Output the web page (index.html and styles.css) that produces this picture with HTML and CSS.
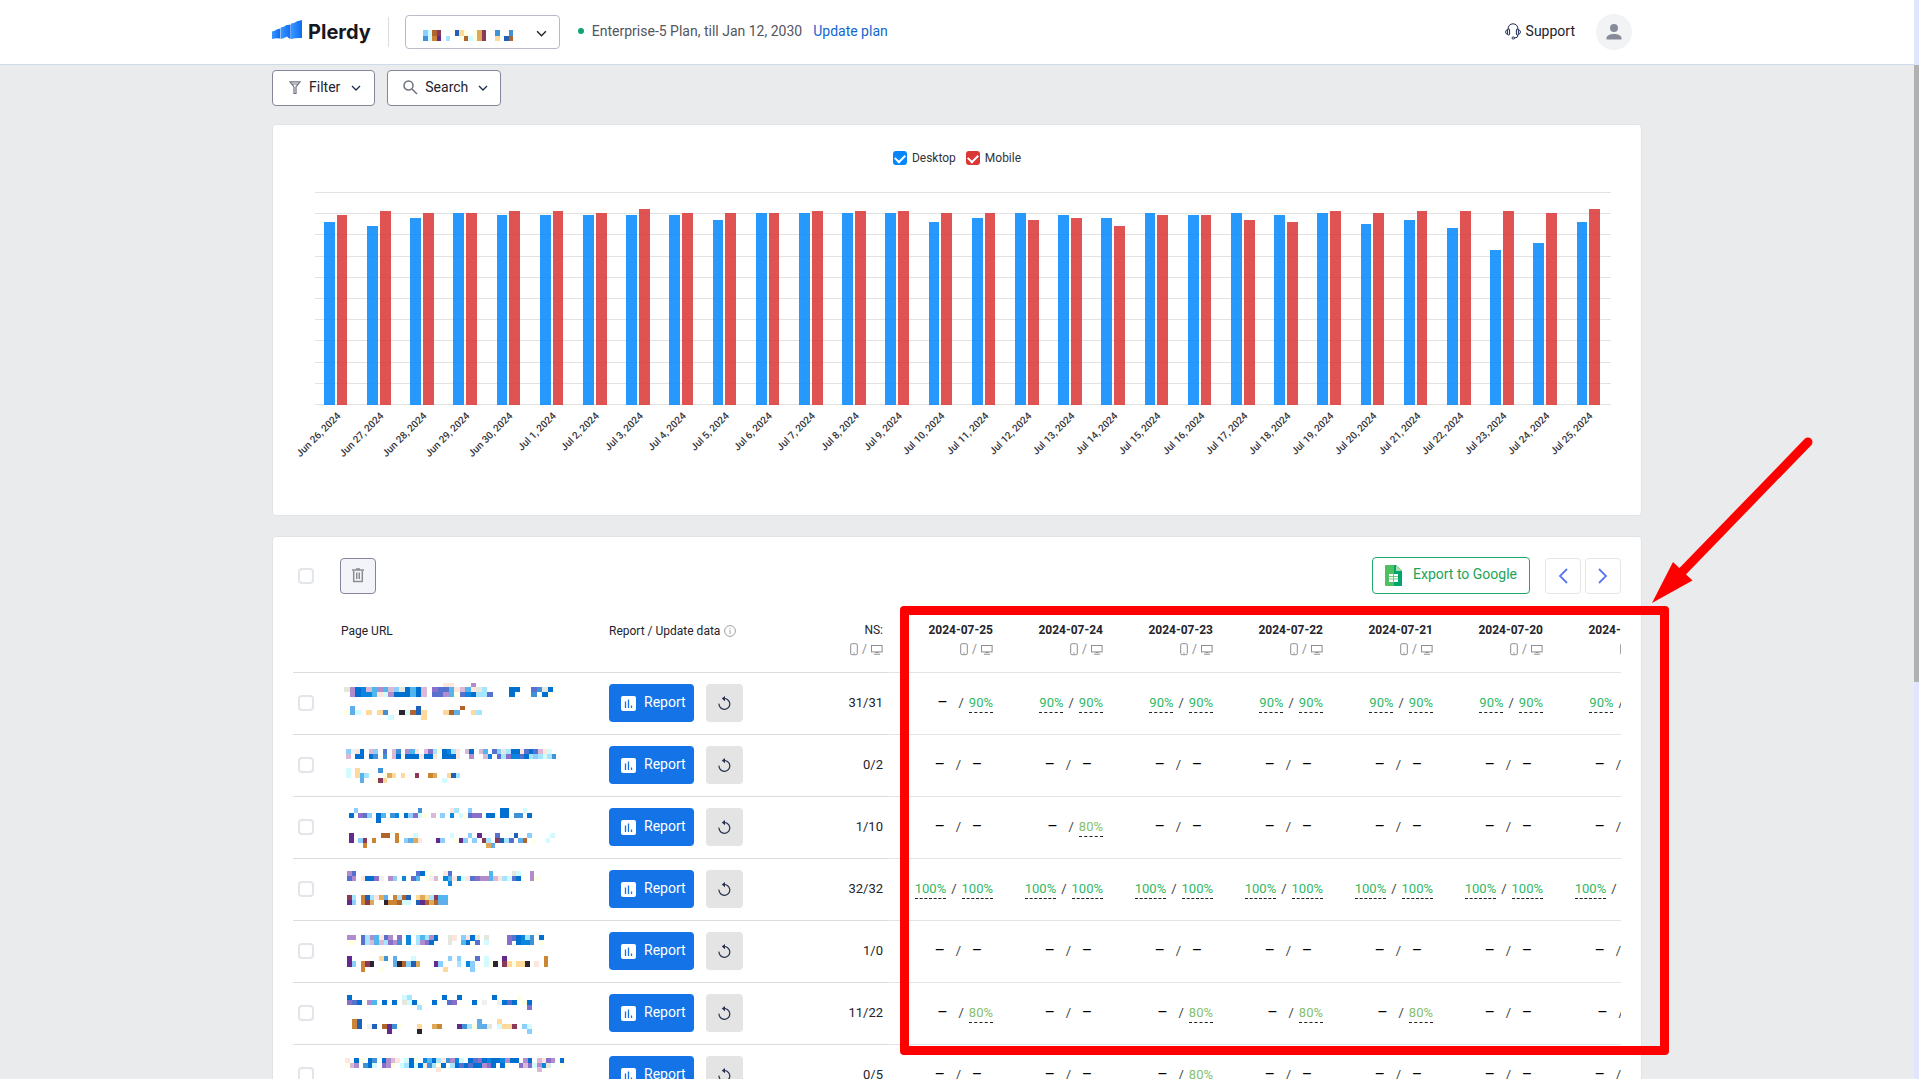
FILE: index.html
```html
<!DOCTYPE html>
<html lang="en">
<head>
<meta charset="utf-8">
<meta name="viewport" content="width=device-width, initial-scale=1">
<title>Plerdy</title>
<link rel="stylesheet" href="styles.css">
</head>
<body>
<svg class="sprite" aria-hidden="true">
  <symbol id="i-chevron" viewBox="0 0 10 6"><path d="M1 1l4 4 4-4" fill="none" stroke="currentColor" stroke-width="1.3"/></symbol>
  <symbol id="i-phone" viewBox="0 0 8 13"><rect x=".7" y=".7" width="6.6" height="11" rx="1.4" fill="none" stroke="currentColor"/><path d="M3.4 10h1.2" stroke="currentColor"/></symbol>
  <symbol id="i-desktop" viewBox="0 0 12 11"><rect x=".5" y="1.5" width="10.6" height="6.4" fill="none" stroke="currentColor"/><path d="M4.5 8.5h3M3 10.2h6" stroke="currentColor"/></symbol>
  <symbol id="i-chart" viewBox="0 0 15 15"><rect width="15" height="15" rx="2" fill="#fff"/><path d="M4.5 5.5V12M7.5 3.5V12M10.5 9.5V12" stroke="#1473e6" stroke-width="1.3"/></symbol>
  <symbol id="i-refresh" viewBox="0 0 13 14"><path d="M1 7.6A5.4 5.4 0 1 0 5 2.7" fill="none" stroke="currentColor" stroke-width="1.2"/><path d="M7 0L3.8 2.6 7 5.2z" fill="currentColor"/></symbol>
</svg>

<div class="app">
  <div class="page">
    <header class="header">
      <div class="container header-inner">
        <a class="logo" href="#">
          <svg width="30" height="20" viewBox="0 0 30 20" aria-hidden="true">
            <defs><linearGradient id="lg" x1="0" x2="1"><stop offset="0" stop-color="#3a97ff"/><stop offset="1" stop-color="#0f6cf2"/></linearGradient></defs>
            <path d="M0 11.500Q3 11 4.500 9.600L8.300 8.600V18.500Q4 17.600 0 19z" fill="url(#lg)"/>
            <path d="M8.700 19V7.500Q12 7 14 5.200L18.600 4.400V19Q16 18.400 15 16.500L11.500 18.200z" fill="url(#lg)"/>
            <path d="M19 19V3.600Q22 3.400 25 1.200L30 0V18Q24 17.600 19 19z" fill="url(#lg)"/>
          </svg>
          <span>Plerdy</span>
        </a>
        <div class="site-picker">
          <select class="site-select" aria-label="Website"><option></option></select>
          <svg class="site-mosaic" id="site-mosaic" width="100" height="14" aria-hidden="true"></svg>
          <svg class="site-chevron" width="11" height="7" aria-hidden="true"><use href="#i-chevron"/></svg>
        </div>
        <p class="plan"><i class="plan-dot"></i>Enterprise-5 Plan, till Jan 12, 2030 <a href="#">Update plan</a></p>
        <a class="support" href="#">
          <svg width="16" height="17" viewBox="0 0 16 17" fill="none" stroke="currentColor" aria-hidden="true"><path d="M3 6.500C3 3 5 .8 8 .8S13 3 13 6.500"/><rect x="2.600" y="6" width="2" height="6" rx="1"/><rect x="11.400" y="6" width="2" height="6" rx="1"/><path d="M2.600 6.600Q.6 7 .6 9t2 2.400M13.400 6.600q2 .4 2 2.400t-2 2.400M13 12q0 3-3.500 3"/><rect x="7" y="14" width="2.600" height="2" rx="1"/></svg>
          Support
        </a>
        <button class="avatar" type="button" aria-label="Account">
          <svg width="16" height="16" viewBox="0 0 16 16" fill="currentColor" aria-hidden="true"><circle cx="8" cy="4" r="4"/><path d="M.5 15.500v-1.500C.5 11.500 4.500 10 8 10s7.500 1.500 7.500 4v1.500z"/></svg>
        </button>
      </div>
    </header>

    <main class="container main">
      <div class="filters">
        <button class="tool-button" type="button">
          <svg width="12" height="13" viewBox="0 0 12 13" fill="none" stroke="#6f7280" stroke-width="1.200" aria-hidden="true"><path d="M1 .8h10L7 6v6.500H5V6zM2.500 3h7"/></svg>
          Filter
          <svg class="caret" width="10" height="6" aria-hidden="true"><use href="#i-chevron"/></svg>
        </button>
        <button class="tool-button tool-search" type="button">
          <svg width="15" height="15" viewBox="0 0 15 15" fill="none" stroke="#6f7280" stroke-width="1.500" aria-hidden="true"><circle cx="5.500" cy="5.500" r="4.500"/><path d="M9 9l5 5"/></svg>
          Search
          <svg class="caret" width="10" height="6" aria-hidden="true"><use href="#i-chevron"/></svg>
        </button>
      </div>

      <section class="card chart-card" aria-label="Daily score">
        <div class="legend">
          <label><input class="swatch swatch-desktop" type="checkbox" checked>Desktop</label>
          <label><input class="swatch swatch-mobile" type="checkbox" checked>Mobile</label>
        </div>
        <div class="plot">
          <div class="grid-lines"><i></i><i></i><i></i><i></i><i></i><i></i><i></i><i></i><i></i><i></i><i></i></div>
          <div class="bars" id="bars"></div>
        </div>
        <div class="ticks" id="ticks"></div>
      </section>

      <section class="card table-card">
        <div class="table-toolbar">
          <input class="check check-all" type="checkbox" aria-label="Select all">
          <button class="delete" type="button" aria-label="Delete">
            <svg width="12" height="15" viewBox="0 0 12 15" fill="none" stroke="#8c8c92" aria-hidden="true"><path d="M0 2h12M4 1h4" stroke-width="1.400"/><path d="M1.700 3v10.500h8.600V3" stroke-width="1.500"/><path d="M4.500 4.500V11M6 4.500V11M7.500 4.500V11"/></svg>
          </button>
          <button class="export" type="button">
            <svg width="17" height="21" viewBox="0 0 17 21" aria-hidden="true"><path d="M1 0h10l6 6v14a1 1 0 0 1-1 1H1a1 1 0 0 1-1-1V1a1 1 0 0 1 1-1z" fill="#4fc060"/><path d="M9 0h2l6 6v14a1 1 0 0 1-1 1H9z" fill="#00a56e"/><path d="M11 0l6 6h-6z" fill="#a8dfa9"/><path d="M4 9h9v8H4z" fill="#fff"/><path d="M4 11.500h9M4 14h9M8.500 9v8" stroke="#4fc060" stroke-width=".8"/></svg>
            <span class="button-text">Export to Google</span>
          </button>
          <div class="pager">
            <button type="button" aria-label="Previous"><svg width="10" height="16" viewBox="0 0 10 16" fill="none" stroke="currentColor" stroke-width="1.800"><path d="M9 1L2 8l7 7"/></svg></button>
            <button type="button" aria-label="Next"><svg width="10" height="16" viewBox="0 0 10 16" fill="none" stroke="currentColor" stroke-width="1.800"><path d="M1 1l7 7-7 7"/></svg></button>
          </div>
        </div>

        <div class="table-scroll">
          <table class="report-table">
            <colgroup><col class="c-check"><col class="c-url"><col class="c-report"><col span="8" class="c-value"></colgroup>
            <thead>
              <tr>
                <th></th>
                <th class="label">Page URL</th>
                <th class="label"><span class="th-info">Report / Update data <svg width="12" height="12" viewBox="0 0 12 12" fill="none" stroke="#a0a0a0" aria-hidden="true"><circle cx="6" cy="6" r="5.400"/><path d="M6 5v4M6 3v1.200"/></svg></span></th>
                <th class="num">NS:<span class="devices"><svg width="8" height="13"><use href="#i-phone"/></svg>/<svg width="12" height="11"><use href="#i-desktop"/></svg></span></th>
                <th class="day">2024-07-25<span class="devices"><svg width="8" height="13"><use href="#i-phone"/></svg>/<svg width="12" height="11"><use href="#i-desktop"/></svg></span></th>
                <th class="day">2024-07-24<span class="devices"><svg width="8" height="13"><use href="#i-phone"/></svg>/<svg width="12" height="11"><use href="#i-desktop"/></svg></span></th>
                <th class="day">2024-07-23<span class="devices"><svg width="8" height="13"><use href="#i-phone"/></svg>/<svg width="12" height="11"><use href="#i-desktop"/></svg></span></th>
                <th class="day">2024-07-22<span class="devices"><svg width="8" height="13"><use href="#i-phone"/></svg>/<svg width="12" height="11"><use href="#i-desktop"/></svg></span></th>
                <th class="day">2024-07-21<span class="devices"><svg width="8" height="13"><use href="#i-phone"/></svg>/<svg width="12" height="11"><use href="#i-desktop"/></svg></span></th>
                <th class="day">2024-07-20<span class="devices"><svg width="8" height="13"><use href="#i-phone"/></svg>/<svg width="12" height="11"><use href="#i-desktop"/></svg></span></th>
                <th class="day">2024-07-19<span class="devices"><svg width="8" height="13"><use href="#i-phone"/></svg>/<svg width="12" height="11"><use href="#i-desktop"/></svg></span></th>
              </tr>
            </thead>
            <tbody>
              <tr>
                <td><input class="check" type="checkbox" aria-label="Select page 1"></td>
                <td><svg class="mosaic" width="230" height="61" aria-hidden="true"></svg></td>
                <td><div class="actions"><button class="report" type="button"><svg width="15" height="15"><use href="#i-chart"/></svg><span class="button-text">Report</span></button><button class="refresh" type="button" aria-label="Update data"><svg width="13" height="14"><use href="#i-refresh"/></svg></button></div></td>
                <td class="num">31/31</td>
                <td><div class="pair"><b>–</b>/<a class="g90" href="#">90%</a></div></td>
                <td><div class="pair"><a class="g90" href="#">90%</a>/<a class="g90" href="#">90%</a></div></td>
                <td><div class="pair"><a class="g90" href="#">90%</a>/<a class="g90" href="#">90%</a></div></td>
                <td><div class="pair"><a class="g90" href="#">90%</a>/<a class="g90" href="#">90%</a></div></td>
                <td><div class="pair"><a class="g90" href="#">90%</a>/<a class="g90" href="#">90%</a></div></td>
                <td><div class="pair"><a class="g90" href="#">90%</a>/<a class="g90" href="#">90%</a></div></td>
                <td><div class="pair"><a class="g90" href="#">90%</a>/<a class="g90" href="#">90%</a></div></td>
              </tr>
              <tr>
                <td><input class="check" type="checkbox" aria-label="Select page 2"></td>
                <td><svg class="mosaic" width="230" height="61" aria-hidden="true"></svg></td>
                <td><div class="actions"><button class="report" type="button"><svg width="15" height="15"><use href="#i-chart"/></svg><span class="button-text">Report</span></button><button class="refresh" type="button" aria-label="Update data"><svg width="13" height="14"><use href="#i-refresh"/></svg></button></div></td>
                <td class="num">0/2</td>
                <td><div class="pair"><b>–</b>/<b>–</b></div></td>
                <td><div class="pair"><b>–</b>/<b>–</b></div></td>
                <td><div class="pair"><b>–</b>/<b>–</b></div></td>
                <td><div class="pair"><b>–</b>/<b>–</b></div></td>
                <td><div class="pair"><b>–</b>/<b>–</b></div></td>
                <td><div class="pair"><b>–</b>/<b>–</b></div></td>
                <td><div class="pair"><b>–</b>/<b>–</b></div></td>
              </tr>
              <tr>
                <td><input class="check" type="checkbox" aria-label="Select page 3"></td>
                <td><svg class="mosaic" width="230" height="61" aria-hidden="true"></svg></td>
                <td><div class="actions"><button class="report" type="button"><svg width="15" height="15"><use href="#i-chart"/></svg><span class="button-text">Report</span></button><button class="refresh" type="button" aria-label="Update data"><svg width="13" height="14"><use href="#i-refresh"/></svg></button></div></td>
                <td class="num">1/10</td>
                <td><div class="pair"><b>–</b>/<b>–</b></div></td>
                <td><div class="pair"><b>–</b>/<a class="g80" href="#">80%</a></div></td>
                <td><div class="pair"><b>–</b>/<b>–</b></div></td>
                <td><div class="pair"><b>–</b>/<b>–</b></div></td>
                <td><div class="pair"><b>–</b>/<b>–</b></div></td>
                <td><div class="pair"><b>–</b>/<b>–</b></div></td>
                <td><div class="pair"><b>–</b>/<b>–</b></div></td>
              </tr>
              <tr>
                <td><input class="check" type="checkbox" aria-label="Select page 4"></td>
                <td><svg class="mosaic" width="230" height="61" aria-hidden="true"></svg></td>
                <td><div class="actions"><button class="report" type="button"><svg width="15" height="15"><use href="#i-chart"/></svg><span class="button-text">Report</span></button><button class="refresh" type="button" aria-label="Update data"><svg width="13" height="14"><use href="#i-refresh"/></svg></button></div></td>
                <td class="num">32/32</td>
                <td><div class="pair"><a class="g90" href="#">100%</a>/<a class="g90" href="#">100%</a></div></td>
                <td><div class="pair"><a class="g90" href="#">100%</a>/<a class="g90" href="#">100%</a></div></td>
                <td><div class="pair"><a class="g90" href="#">100%</a>/<a class="g90" href="#">100%</a></div></td>
                <td><div class="pair"><a class="g90" href="#">100%</a>/<a class="g90" href="#">100%</a></div></td>
                <td><div class="pair"><a class="g90" href="#">100%</a>/<a class="g90" href="#">100%</a></div></td>
                <td><div class="pair"><a class="g90" href="#">100%</a>/<a class="g90" href="#">100%</a></div></td>
                <td><div class="pair"><a class="g90" href="#">100%</a>/<a class="g90" href="#">100%</a></div></td>
              </tr>
              <tr>
                <td><input class="check" type="checkbox" aria-label="Select page 5"></td>
                <td><svg class="mosaic" width="230" height="61" aria-hidden="true"></svg></td>
                <td><div class="actions"><button class="report" type="button"><svg width="15" height="15"><use href="#i-chart"/></svg><span class="button-text">Report</span></button><button class="refresh" type="button" aria-label="Update data"><svg width="13" height="14"><use href="#i-refresh"/></svg></button></div></td>
                <td class="num">1/0</td>
                <td><div class="pair"><b>–</b>/<b>–</b></div></td>
                <td><div class="pair"><b>–</b>/<b>–</b></div></td>
                <td><div class="pair"><b>–</b>/<b>–</b></div></td>
                <td><div class="pair"><b>–</b>/<b>–</b></div></td>
                <td><div class="pair"><b>–</b>/<b>–</b></div></td>
                <td><div class="pair"><b>–</b>/<b>–</b></div></td>
                <td><div class="pair"><b>–</b>/<b>–</b></div></td>
              </tr>
              <tr>
                <td><input class="check" type="checkbox" aria-label="Select page 6"></td>
                <td><svg class="mosaic" width="230" height="61" aria-hidden="true"></svg></td>
                <td><div class="actions"><button class="report" type="button"><svg width="15" height="15"><use href="#i-chart"/></svg><span class="button-text">Report</span></button><button class="refresh" type="button" aria-label="Update data"><svg width="13" height="14"><use href="#i-refresh"/></svg></button></div></td>
                <td class="num">11/22</td>
                <td><div class="pair"><b>–</b>/<a class="g80" href="#">80%</a></div></td>
                <td><div class="pair"><b>–</b>/<b>–</b></div></td>
                <td><div class="pair"><b>–</b>/<a class="g80" href="#">80%</a></div></td>
                <td><div class="pair"><b>–</b>/<a class="g80" href="#">80%</a></div></td>
                <td><div class="pair"><b>–</b>/<a class="g80" href="#">80%</a></div></td>
                <td><div class="pair"><b>–</b>/<b>–</b></div></td>
                <td><div class="pair"><b>–</b>/<a class="g80" href="#">80%</a></div></td>
              </tr>
              <tr>
                <td><input class="check" type="checkbox" aria-label="Select page 7"></td>
                <td><svg class="mosaic" width="230" height="61" aria-hidden="true"></svg></td>
                <td><div class="actions"><button class="report" type="button"><svg width="15" height="15"><use href="#i-chart"/></svg><span class="button-text">Report</span></button><button class="refresh" type="button" aria-label="Update data"><svg width="13" height="14"><use href="#i-refresh"/></svg></button></div></td>
                <td class="num">0/5</td>
                <td><div class="pair"><b>–</b>/<b>–</b></div></td>
                <td><div class="pair"><b>–</b>/<b>–</b></div></td>
                <td><div class="pair"><b>–</b>/<a class="g80" href="#">80%</a></div></td>
                <td><div class="pair"><b>–</b>/<b>–</b></div></td>
                <td><div class="pair"><b>–</b>/<b>–</b></div></td>
                <td><div class="pair"><b>–</b>/<b>–</b></div></td>
                <td><div class="pair"><b>–</b>/<b>–</b></div></td>
              </tr>
            </tbody>
          </table>
        </div>

        <div class="callout-box"></div>
        <svg class="callout-arrow" width="165" height="168" viewBox="0 0 165 168" aria-hidden="true"><path d="M156 6L28 138" stroke="#f00" stroke-width="9" stroke-linecap="round"/><path d="M0 167l21-41 19.500 18.500z" fill="#f00"/></svg>
      </section>
    </main>
  </div>
  <div class="scrollbar"><div class="scroll-thumb"></div></div>
</div>
<script src="app.js"></script>
</body>
</html>
```
FILE: styles.css
```css
* { box-sizing: border-box; }

body {
  margin: 0;
  background: #eaebed;
  color: #23232b;
  font-family: Roboto, "Open Sans", sans-serif;
  font-size: 14px;
  line-height: 20px;
}

button, select, input { font: inherit; margin: 0; }
button { cursor: pointer; padding: 0; }
a { text-decoration: none; }
svg { display: block; flex: none; }
.sprite { position: absolute; width: 0; height: 0; }

.app {
  display: grid;
  grid-template-columns: minmax(0, 1fr) 5px;
  height: 100vh;
  overflow: hidden;
}
.page { overflow: hidden; }
.scrollbar {
  display: grid;
  grid-template-rows: 65px 14fr 9fr;
  background: #e1e5ff;
}
.scroll-thumb { grid-row: 2; background: #b1b1b1; }

.container { max-width: 1370px; margin: 0 auto; }

/* Header */
.header { background: #fff; border-bottom: 1px solid #cfd9ea; }
.header-inner {
  display: flex;
  align-items: center;
  height: 64px;
  padding-right: 10px;
}
.logo {
  display: flex;
  align-items: center;
  gap: 6px;
  padding-right: 17px;
  margin-right: 16px;
  height: 30px;
  border-right: 1px solid #dcdde1;
  color: #17171f;
  font: 700 20px/30px Inter, sans-serif;
}
.logo svg { margin-bottom: 4px; }
.site-picker { position: relative; width: 155px; height: 34px; }
.site-select {
  width: 100%;
  height: 100%;
  appearance: none;
  background: #fff;
  border: 1px solid #b9bcc8;
  border-radius: 4px;
}
.site-mosaic { position: absolute; left: 18px; top: 14px; pointer-events: none; }
.site-chevron { position: absolute; right: 13px; top: 15px; pointer-events: none; }
.plan {
  display: flex;
  align-items: center;
  margin: 0 0 2px 18px;
  color: #55555c;
}
.plan-dot { width: 6px; height: 6px; margin-right: 8px; border-radius: 50%; background: #0ea573; }
.plan a { margin-left: 11px; color: #1166d2; }
.support {
  display: flex;
  align-items: center;
  gap: 5px;
  margin: 0 21px 2px auto;
  color: #1c1c2e;
}
.support svg { color: #1f2a52; }
.avatar {
  display: grid;
  place-items: center;
  width: 36px;
  height: 36px;
  border: 0;
  border-radius: 50%;
  background: #f2f3f5;
  color: #868b97;
}

/* Filters */
.filters { display: flex; gap: 12px; padding: 5px 0 18px; }
.tool-button {
  display: flex;
  align-items: center;
  gap: 8px;
  height: 36px;
  padding: 0 13px 2px 16px;
  border: 1px solid #85859a;
  border-radius: 4px;
  background: #fff;
  color: #23232b;
}
.tool-button .caret { margin: 2px 0 0 3px; color: #1f2a52; }
.tool-search { gap: 7px; padding: 0 12px 2px 15px; }

.card {
  background: #fff;
  border: 1px solid #e0e2e6;
  border-radius: 4px;
}

/* Chart */
.chart-card { padding: 25px 31px 41px 41px; margin-bottom: 20px; }
.legend {
  display: flex;
  justify-content: center;
  gap: 10px;
  padding-right: 10px;
  font-size: 12px;
  line-height: 16px;
}
.legend label { display: flex; align-items: center; gap: 5px; color: #33333a; }
.swatch {
  display: grid;
  place-items: center;
  width: 14px;
  height: 14px;
  appearance: none;
  border-radius: 3px;
}
.swatch::before {
  content: "";
  width: 8px;
  height: 5px;
  margin-bottom: 2px;
  border: solid #fff;
  border-width: 0 0 2px 2px;
  transform: rotate(-45deg);
}
.swatch-desktop { background: #0387fb; }
.swatch-mobile { background: #db3737; }
.plot { position: relative; height: 213px; margin-top: 26px; }
.grid-lines {
  position: absolute;
  inset: 0 -1px 0 1px;
  display: flex;
  flex-direction: column;
  justify-content: space-between;
}
.grid-lines i { height: 1px; background: #e2e2e2; }
.bars, .ticks { display: grid; grid-template-columns: repeat(30, minmax(0, 1fr)); }
.bars { position: relative; height: 100%; }
.bar-group { display: flex; align-items: flex-end; justify-content: center; gap: 2px; }
.bar { width: 25%; }
.bar-desktop { background: rgba(3, 135, 251, .86); }
.bar-mobile { background: rgba(219, 55, 55, .86); }
.ticks { height: 69px; padding-top: 5px; }
.tick {
  display: flex;
  justify-content: flex-end;
  width: 50%;
  padding-right: 1px;
  font-size: 10px;
  line-height: 12px;
  font-weight: 500;
  color: #33333a;
  white-space: nowrap;
}
.tick span { transform: rotate(-45deg); transform-origin: top right; }

/* Table */
.table-card { position: relative; padding: 20px; }
.table-toolbar { display: flex; align-items: center; }
.check {
  display: block;
  width: 16px;
  height: 16px;
  margin-left: 5px;
  appearance: none;
  background: #fff;
  border: 2px solid #e2e5ea;
  border-radius: 4px;
}
.check-all { margin-right: 26px; }
.delete {
  display: grid;
  place-items: center;
  width: 36px;
  height: 36px;
  border: 1px solid #85859a;
  border-radius: 4px;
  background: #f3f4f9;
}
.button-text { padding-bottom: 3px; }
.export {
  display: flex;
  align-items: center;
  gap: 11px;
  height: 37px;
  margin-left: auto;
  padding: 0 12px;
  border: 1px solid #21a76a;
  border-radius: 4px;
  background: #fff;
  color: #22a35a;
}
.pager { display: flex; gap: 4px; margin-left: 15px; }
.pager button {
  display: grid;
  place-items: center;
  width: 36px;
  height: 36px;
  border: 1px solid #e3e5ea;
  border-radius: 4px;
  background: #fff;
  color: #5b78f0;
}
.table-scroll { overflow: hidden; }
.report-table {
  width: 1365px;
  table-layout: fixed;
  border-collapse: collapse;
}
.c-check { width: 48px; }
.c-url { width: 268px; }
.c-report { width: 169px; }
.c-value { width: 110px; }
.report-table th {
  height: 78px;
  padding: 28px 0 0;
  vertical-align: top;
  border-bottom: 1px solid #dcdcde;
  text-align: left;
  font-size: 12px;
  line-height: 16px;
  font-weight: 400;
}
.report-table .label { padding-top: 29px; }
.report-table td {
  height: 62px;
  padding: 0;
  border-bottom: 1px solid #dcdcde;
  font-size: 13px;
  line-height: 16px;
}
.report-table th:nth-child(n+5), .report-table td:nth-child(n+5) { border-color: #e4e4e6; }
.report-table .num, .report-table .day { padding-right: 5px; text-align: right; }
.report-table .day { font-weight: 700; }
.th-info { display: flex; align-items: center; gap: 4px; }
.devices {
  display: flex;
  align-items: center;
  justify-content: flex-end;
  gap: 4px;
  margin-top: 3px;
  font-weight: 400;
  color: #8d8d92;
}
.mosaic { overflow: hidden; }
.actions { display: flex; gap: 12px; }
.report {
  display: flex;
  align-items: center;
  gap: 8px;
  height: 38px;
  padding: 0 8px 0 12px;
  border: 0;
  border-radius: 4px;
  background: #1473e6;
  color: #fff;
  font-size: 14px;
}
.refresh {
  display: grid;
  place-items: center;
  width: 37px;
  height: 38px;
  border: 0;
  border-radius: 4px;
  background: #e4e4e4;
  color: #26304f;
}
.pair {
  display: flex;
  align-items: center;
  justify-content: flex-end;
  padding-right: 5px;
  color: #3c3c44;
}
.pair b { width: 32px; text-align: center; font-size: 16px; font-weight: 400; color: #000; }
.pair a { margin: 2px 5px 0; padding-bottom: 1px; border-bottom: 1px dashed #222; }
.pair a:first-child { margin-left: 0; }
.pair a:last-child { margin-right: 0; }
.g90 { color: #2fb866; }
.g80 { color: #86c06c; }

/* Callout drawn over the date columns */
.callout-box {
  position: absolute;
  left: 627px;
  top: 69px;
  width: 769px;
  height: 449px;
  border: 9px solid #f00;
  border-radius: 4px;
}
.callout-arrow { position: absolute; left: 1379px; top: -101px; }
```
FILE: app.js
```js
// Daily scores, [label, desktop, mobile], on a scale of 0 to 100.
const days = [
  ["Jun 26", 86, 89], ["Jun 27", 84, 91], ["Jun 28", 88, 90], ["Jun 29", 90, 90], ["Jun 30", 89, 91],
  ["Jul 1", 89, 91], ["Jul 2", 89, 90], ["Jul 3", 89, 92], ["Jul 4", 89, 90], ["Jul 5", 87, 90],
  ["Jul 6", 90, 90], ["Jul 7", 90, 91], ["Jul 8", 90, 91], ["Jul 9", 90, 91], ["Jul 10", 86, 90],
  ["Jul 11", 88, 90], ["Jul 12", 90, 87], ["Jul 13", 89, 88], ["Jul 14", 88, 84], ["Jul 15", 90, 89],
  ["Jul 16", 89, 89], ["Jul 17", 90, 87], ["Jul 18", 89, 86], ["Jul 19", 90, 91], ["Jul 20", 85, 90],
  ["Jul 21", 87, 91], ["Jul 22", 83, 91], ["Jul 23", 73, 91], ["Jul 24", 76, 90], ["Jul 25", 86, 92]
];
document.getElementById("bars").innerHTML = days.map(([, d, m]) =>
  `<div class="bar-group"><div class="bar bar-desktop" style="height:${d}%"></div><div class="bar bar-mobile" style="height:${m}%"></div></div>`).join("");
document.getElementById("ticks").innerHTML = days.map(([label]) =>
  `<div class="tick"><span>${label}, 2024</span></div>`).join("");

// Pixelated addresses: each letter is one coloured cell.
const colours = {
  a: "#0070d0", b: "#52b6ee", c: "#8bcfff", d: "#d2fbff", e: "#5870ce", f: "#886fca", g: "#b18ccc",
  h: "#dab8d6", i: "#ffe6dc", j: "#ffffe4", k: "#e4e8dc", l: "#a6e5ff", m: "#0a86de", n: "#3f92d8",
  p: "#63298c", q: "#cc8533", r: "#b0652c", s: "#ffd99c", t: "#2a2530", u: "#8a3a58", v: "#1f61b6",
  w: "#5fade9", y: "#deaa58", z: "#f0f0f2"
};
function drawMosaic(svg, cell, x0, lines) {
  svg.innerHTML = lines.map(([y, height, text]) => [...text].map((c, i) =>
    c === " " ? "" : `<rect x="${Math.round(x0 + i * cell)}" y="${y}" width="${Math.round(x0 + (i + 1) * cell) - Math.round(x0 + i * cell)}" height="${height}" fill="${colours[c]}"/>`
  ).join("")).join("");
}
drawMosaic(document.getElementById("site-mosaic"), 4.5, 0, [
  [1, 6, "cdru   vsj jyu  n  n"],
  [7, 5, "ndqp l  jrdjyu  s vr "]
]);
const rows = [
  [5.5, 3, [
    [10, 4, "                  ii   g"],
    [14, 5, "kgamhbgbhckabah feebihbikl    aa  enka"],
    [19, 5, " gammbidgaaabah eegbjemalle   a   n aj"],
    [33, 4, " w           v"],
    [37, 5, "jwd s sn  tdrvs   srw  sl"],
    [33, 4, "                     r"],
    [42, 5, "        d     s"]]],
  [4.57, 5, [
    [14, 5, "czia hc e hn gbi hfljamli ha hb ecklaaieaehid"],
    [19, 5, "h aa an n ha aaaiaai aaai  g  hm elfmmealcldln"],
    [33, 5, "d s    n"],
    [38, 5, "d sbl   jys s  u  qy  svl"],
    [43, 5, "   w  jus            d"]]],
  [4.57, 8, [
    [11, 5, " c             n      il  c      aa   d"],
    [16, 5, "a fec ab nm acfdj h c m djeff aa aa nn a"],
    [21, 5, "      a"],
    [36, 5, "p      rr q   d       d   c p   e   v  c"],
    [41, 5, "p cu q    q cwyi   pc  jpc c ul uvle wr j  d"],
    [36, 5, "                                            d"],
    [46, 5, "   q                          yw"]]],
  [4.57, 6, [
    [12, 5, "ge             ea j  ie        b    kd  g"],
    [17, 5, "eg iaafz gc m eb jzh mbimdiefggbhildea  gj"],
    [22, 5, "                      m"],
    [36, 5, "ul qvliyw qlrv syslubb"],
    [41, 5, "pc quy  tqqrdd vpryrww"]]],
  [4.57, 6, [
    [14, 6, "gg elgbieg f m lblga  ki ciak k    feamln a"],
    [19, 5, "jj elhbhlfgn m lgfa   k  ba e d    f ammn j"],
    [35, 5, "p      sn w   d       c c   e d   p        q"],
    [40, 6, "pc qut    wtrcvy   pc   l mc  djt usjsst i q"],
    [46, 5, "   q   j             s     c"]]],
  [5, 6, [
    [12, 5, "a          dl      a  a      a    j"],
    [17, 5, "fea gb a a kda   a  ef   a z  zaea ja"],
    [22, 5, "              l                     f"],
    [36, 5, " qv                       w   s"],
    [41, 5, " qv zv rpnj   s  yq   pnljwwk dssu cd"],
    [46, 5, "        p     t                     c"]]],
  [4.57, 4, [
    [13, 5, "i aj an aghi daj mbalingmd aefamaamgaa ga hifg a"],
    [18, 5, "jhg nad fgj dladainlja laeaeaagfa aj  fhfdgmk  j"],
    [22, 5, "                    i                     h"]]]
];
document.querySelectorAll(".mosaic").forEach((svg, i) => drawMosaic(svg, ...rows[i]));
```
